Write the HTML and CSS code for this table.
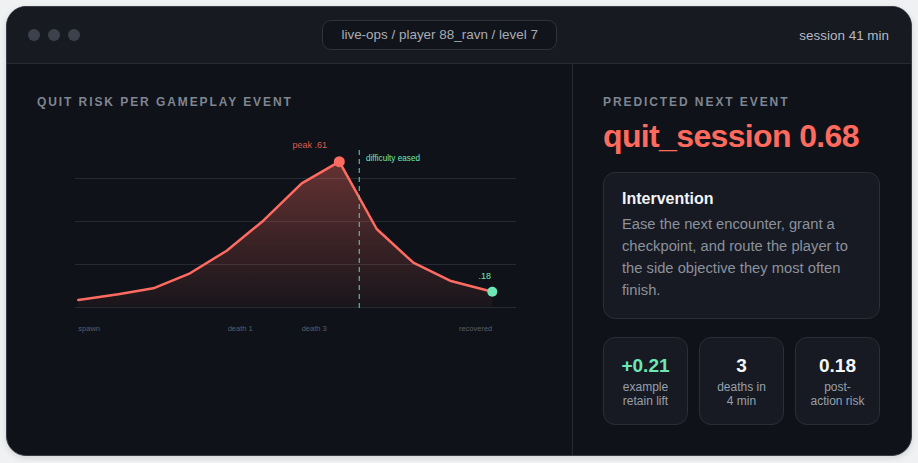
FILE: index.html
```html
<!DOCTYPE html>
<html lang="en">
<head>
<meta charset="utf-8">
<title>Quit risk</title>
<link rel="stylesheet" href="styles.css">
</head>
<body>
<div class="window">
  <header class="titlebar">
    <div class="dots"><span></span><span></span><span></span></div>
    <div class="crumb">live-ops / player 88_ravn / level 7</div>
    <div class="session">session 41 min</div>
  </header>
  <main class="content">
    <section class="chart-panel">
      <h2 class="eyebrow">QUIT RISK PER GAMEPLAY EVENT</h2>
      <svg class="chart" width="505" height="225" viewBox="0 0 505 225">
        <defs>
          <linearGradient id="riskfill" x1="0" y1="0" x2="0" y2="1">
            <stop offset="0" stop-color="#ff6b61" stop-opacity="0.36"/>
            <stop offset="1" stop-color="#ff6b61" stop-opacity="0.04"/>
          </linearGradient>
        </defs>
        <g class="grid">
          <line x1="38" y1="58.5" x2="479" y2="58.5"/>
          <line x1="38" y1="101.5" x2="479" y2="101.5"/>
          <line x1="38" y1="144.5" x2="479" y2="144.5"/>
          <line x1="38" y1="187.5" x2="479" y2="187.5"/>
        </g>
        <path class="area" d="M41.3,187 L41.3,180 L81.3,174.3 L116.3,168.3 L153,153.3 L189.7,130.7 L226.3,100.7 L264.7,63.3 L302.3,41.7 L339.7,109 L376.3,142.7 L413,160.7 L455.3,171.7 L455.3,187 Z"/>
        <polyline class="line" points="41.3,180 81.3,174.3 116.3,168.3 153,153.3 189.7,130.7 226.3,100.7 264.7,63.3 302.3,41.7 339.7,109 376.3,142.7 413,160.7 455.3,171.7"/>
        <line class="eased" x1="322.3" y1="30" x2="322.3" y2="192"/>
        <circle class="peak-dot" cx="302.3" cy="41.7" r="5.5"/>
        <circle class="end-dot" cx="455.3" cy="171.7" r="5"/>
        <text class="lbl-peak" x="272.7" y="27.7" text-anchor="middle">peak .61</text>
        <text class="lbl-eased" x="329" y="41">difficulty eased</text>
        <text class="lbl-end" x="447.7" y="159" text-anchor="middle">.18</text>
        <text class="lbl-axis" x="41.3" y="211">spawn</text>
        <text class="lbl-axis" x="190.7" y="211">death 1</text>
        <text class="lbl-axis" x="264.7" y="211">death 3</text>
        <text class="lbl-axis" x="455.3" y="211" text-anchor="end">recovered</text>
      </svg>
    </section>
    <aside class="side">
      <h2 class="eyebrow">PREDICTED NEXT EVENT</h2>
      <div class="prediction">quit_session 0.68</div>
      <div class="card">
        <h3 class="card-title">Intervention</h3>
        <p class="card-body">Ease the next encounter, grant a checkpoint, and route the player to the side objective they most often finish.</p>
      </div>
      <div class="stats">
        <div class="stat">
          <div class="stat-value positive">+0.21</div>
          <div class="stat-label">example retain lift</div>
        </div>
        <div class="stat">
          <div class="stat-value">3</div>
          <div class="stat-label">deaths in 4 min</div>
        </div>
        <div class="stat">
          <div class="stat-value">0.18</div>
          <div class="stat-label">post-action risk</div>
        </div>
      </div>
    </aside>
  </main>
</div>
</body>
</html>
```
FILE: styles.css
```css
* { box-sizing: border-box; }

html, body {
  margin: 0;
}

body {
  background: #f0f1f2;
  padding: 6px;
  font-family: "Liberation Sans", Arial, sans-serif;
}

.window {
  width: 906px;
  height: 450px;
  border: 1px solid #383c46;
  border-radius: 20px;
  overflow: hidden;
  background: #0f1218;
  display: flex;
  flex-direction: column;
  box-shadow: 0 2px 6px rgba(0, 0, 0, 0.12);
}

.titlebar {
  height: 57px;
  flex: none;
  display: flex;
  align-items: center;
  justify-content: space-between;
  padding: 0 22px 0 21px;
  background: #171a21;
  border-bottom: 1px solid #272b34;
}

.dots {
  display: flex;
  gap: 8px;
}

.dots span {
  width: 12px;
  height: 12px;
  border-radius: 50%;
  background: #3d414c;
}

.crumb {
  height: 30px;
  line-height: 28px;
  padding: 0 18px;
  border: 1px solid #2f333c;
  border-radius: 9px;
  background: #11141a;
  color: #a8acb5;
  font-size: 13.44px;
}

.session {
  color: #b5b9c1;
  font-size: 13.44px;
}

.content {
  flex: 1;
  display: flex;
}

.chart-panel {
  width: 566px;
  flex: none;
  border-right: 1px solid #262a33;
  padding: 30px 30px;
  display: flex;
  flex-direction: column;
}

.eyebrow {
  margin: 0;
  font-size: 12px;
  line-height: 16px;
  font-weight: 700;
  letter-spacing: 0.16em;
  color: #7f8591;
}

.chart {
  display: block;
  margin-top: 10px;
  overflow: visible;
}

.grid line {
  stroke: #262a33;
  stroke-width: 1;
}

.area {
  fill: url(#riskfill);
}

.line {
  fill: none;
  stroke: #ff6b61;
  stroke-width: 2.5;
  stroke-linejoin: round;
  stroke-linecap: round;
}

.eased {
  stroke: #5fc9a0;
  stroke-width: 1.3;
  stroke-dasharray: 5 4;
  opacity: 0.85;
}

.peak-dot { fill: #ff6b61; }
.end-dot { fill: #6ee7b7; }

.chart text {
  font-family: "Liberation Sans", Arial, sans-serif;
}

.lbl-peak { font-size: 9px; fill: #d65e55; }
.lbl-eased { font-size: 8.2px; fill: #6ee7b7; }
.lbl-end { font-size: 9px; fill: #6ee7b7; }
.lbl-axis { font-size: 7.5px; fill: #5a5f69; }

.side {
  flex: 1;
  padding: 30px 31px 30px 30px;
  display: flex;
  flex-direction: column;
}

.prediction {
  margin-top: 9px;
  font-size: 32px;
  line-height: 35px;
  font-weight: 700;
  letter-spacing: -0.02em;
  color: #ff6a5e;
}

.card {
  margin-top: 18px;
  padding: 16px 18px 17px;
  border: 1px solid #2a2e38;
  border-radius: 12px;
  background: #171a22;
}

.card-title {
  margin: 0;
  font-size: 16px;
  line-height: 20px;
  font-weight: 700;
  color: #f3f4f6;
}

.card-body {
  margin: 4px 0 0;
  font-size: 14.72px;
  line-height: 22.08px;
  color: #8b919d;
}

.stats {
  margin-top: 18px;
  display: grid;
  grid-template-columns: repeat(3, 1fr);
  gap: 11px;
}

.stat {
  padding: 16px 14px;
  border: 1px solid #2a2e38;
  border-radius: 12px;
  background: #171a22;
  text-align: center;
}

.stat-value {
  font-size: 19px;
  line-height: 23px;
  font-weight: 700;
  color: #f5f6f8;
}

.stat-value.positive {
  color: #6ee7b7;
}

.stat-label {
  margin-top: 3px;
  font-size: 12px;
  line-height: 14px;
  color: #98a0ab;
}
```
